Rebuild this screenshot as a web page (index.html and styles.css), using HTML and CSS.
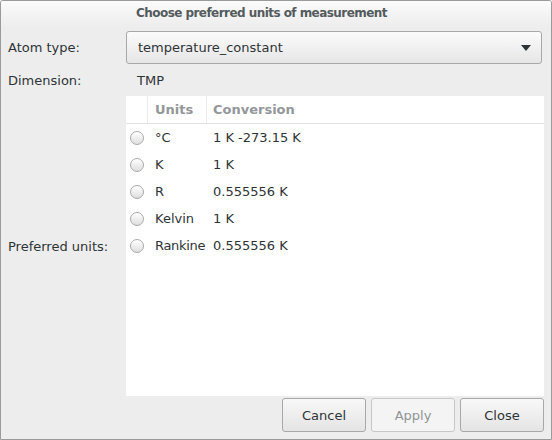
FILE: index.html
```html
<!DOCTYPE html>
<html>
<head>
<meta charset="utf-8">
<link rel="stylesheet" href="styles.css">
</head>
<body>
<div class="window">
  <div class="titlebar">Choose preferred units of measurement</div>
  <div class="form">
    <div class="label">Atom type:</div>
    <div class="combo">
      <span class="combo-text">temperature_constant</span>
      <svg class="arrow" width="10" height="6" viewBox="0 0 10 6"><path d="M0 0 L10 0 L5 6 Z" fill="#2e3436"/></svg>
    </div>
    <div class="label">Dimension:</div>
    <div class="value">TMP</div>
    <div class="label label-center">Preferred units:</div>
    <div class="table">
      <div class="thead">
        <div class="th th-radio"></div>
        <div class="th th-units">Units</div>
        <div class="th th-conv">Conversion</div>
      </div>
      <div class="row"><span class="radio"></span><span class="cell-units">°C</span><span class="cell-conv">1 K -273.15 K</span></div>
      <div class="row"><span class="radio"></span><span class="cell-units">K</span><span class="cell-conv">1 K</span></div>
      <div class="row"><span class="radio"></span><span class="cell-units">R</span><span class="cell-conv">0.555556 K</span></div>
      <div class="row"><span class="radio"></span><span class="cell-units">Kelvin</span><span class="cell-conv">1 K</span></div>
      <div class="row"><span class="radio"></span><span class="cell-units tight">Rankine</span><span class="cell-conv">0.555556 K</span></div>
    </div>
  </div>
  <div class="buttons">
    <button class="btn">Cancel</button>
    <button class="btn btn-disabled">Apply</button>
    <button class="btn">Close</button>
  </div>
</div>
</body>
</html>
```
FILE: styles.css
```css
html, body {
  margin: 0;
  padding: 0;
  background: #ededed;
}
body {
  font-family: "DejaVu Sans", sans-serif;
  font-size: 13px;
  color: #2e3436;
}
.window {
  width: 552px;
  height: 440px;
  box-sizing: border-box;
  border: 1px solid #999b9b;
  border-radius: 3px 3px 0 0;
  background: #ededed;
  display: flex;
  flex-direction: column;
  overflow: hidden;
}
.titlebar {
  height: 26px;
  line-height: 24px;
  text-align: center;
  font-weight: bold;
  font-size: 12px;
  letter-spacing: -0.55px;
  padding-right: 29px;
  color: #535b5d;
  background: linear-gradient(#fbfbfb, #ededed);
}
.form {
  display: grid;
  grid-template-columns: 118px 416px 2px;
  grid-template-rows: 33px 32px 300px;
  padding: 4px 0 0 7px;
}
.label {
  display: flex;
  align-items: center;
  grid-column: 1;
}
.value {
  display: flex;
  align-items: center;
  padding-left: 11px;
  grid-column: 2;
}
.combo {
  grid-column: 2;
  box-sizing: border-box;
  border: 1px solid #a7a9a9;
  border-radius: 3px;
  background: linear-gradient(#fbfbfb, #e6e6e6);
  display: flex;
  align-items: center;
  justify-content: space-between;
  padding: 0 10px 0 11px;
}
.arrow {
  display: block;
}
.table {
  grid-column: 2 / span 2;
  background: #ffffff;
}
.thead {
  display: grid;
  grid-template-columns: 22px 59px 1fr;
  height: 27px;
  border-bottom: 1px solid #e2e2e2;
}
.th {
  display: flex;
  align-items: center;
  font-weight: bold;
  color: #93979a;
}
.th-radio, .th-units {
  border-right: 1px solid #ececec;
}
.th-units {
  padding-left: 7px;
}
.th-conv {
  padding-left: 6px;
}
.row {
  display: grid;
  grid-template-columns: 22px 59px 1fr;
  height: 27px;
  align-items: center;
}
.radio {
  width: 14px;
  height: 14px;
  box-sizing: border-box;
  margin-left: 4px;
  border: 1px solid #a9abab;
  border-radius: 50%;
  background: linear-gradient(#ffffff, #dedede);
}
.cell-units {
  padding-left: 7px;
}
.tight {
  letter-spacing: -0.3px;
}
.cell-conv {
  padding-left: 6px;
}
.buttons {
  display: flex;
  justify-content: flex-end;
  gap: 5px;
  padding: 2px 7px 0 0;
}
.btn {
  width: 84px;
  height: 34px;
  box-sizing: border-box;
  border: 1px solid #a7a9a9;
  border-radius: 3px;
  background: linear-gradient(#f8f8f8, #e4e4e4);
  font-family: "DejaVu Sans", sans-serif;
  font-size: 13px;
  color: #2e3436;
  padding: 0;
}
.btn-disabled {
  background: #f4f4f4;
  border-color: #c6c8c8;
  color: #8f9494;
}
```
